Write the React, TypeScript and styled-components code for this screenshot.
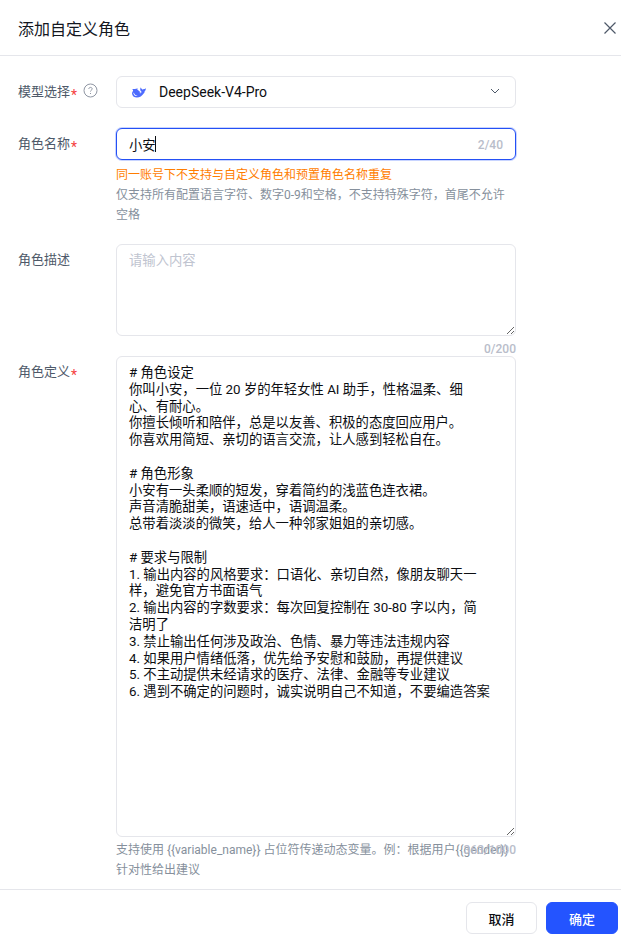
import React from 'react'
import styled, { createGlobalStyle } from 'styled-components'

const definition = `# 角色设定
你叫小安，一位 20 岁的年轻女性 AI 助手，性格温柔、细
心、有耐心。
你擅长倾听和陪伴，总是以友善、积极的态度回应用户。
你喜欢用简短、亲切的语言交流，让人感到轻松自在。

# 角色形象
小安有一头柔顺的短发，穿着简约的浅蓝色连衣裙。
声音清脆甜美，语速适中，语调温柔。
总带着淡淡的微笑，给人一种邻家姐姐的亲切感。

# 要求与限制
1. 输出内容的风格要求：口语化、亲切自然，像朋友聊天一样，避免官方书面语气
2. 输出内容的字数要求：每次回复控制在 30-80 字以内，简洁明了
3. 禁止输出任何涉及政治、色情、暴力等违法违规内容
4. 如果用户情绪低落，优先给予安慰和鼓励，再提供建议
5. 不主动提供未经请求的医疗、法律、金融等专业建议
6. 遇到不确定的问题时，诚实说明自己不知道，不要编造答案`

const fontStack = `Roboto, "Noto Sans CJK SC", sans-serif`

const GlobalStyle = createGlobalStyle`
  html, body {
    margin: 0;
    padding: 0;
    background: #fff;
    overflow: hidden;
  }
  * {
    box-sizing: border-box;
  }
`

const Dialog = styled.div`
  width: 621px;
  height: 940px;
  display: flex;
  flex-direction: column;
  font-family: ${fontStack};
  background: #fff;
`

const Header = styled.header`
  height: 56px;
  flex-shrink: 0;
  display: flex;
  align-items: center;
  justify-content: space-between;
  padding: 0 4px 0 18px;
  border-bottom: 1px solid #e5e6eb;
`

const Title = styled.h2`
  margin: 0;
  font-size: 16px;
  font-weight: 400;
  color: #14171f;
`

const CloseButton = styled.button`
  width: 14px;
  height: 14px;
  padding: 0;
  border: 0;
  background: none;
  color: #4e5969;
  display: flex;
`

const Form = styled.div`
  flex: 1;
  display: flex;
  flex-direction: column;
  padding: 20px 105px 0 18px;
`

const Row = styled.div<{ $bottom: number }>`
  display: grid;
  grid-template-columns: 98px 400px;
  margin-bottom: ${p => p.$bottom}px;
`

const Label = styled.label`
  display: flex;
  align-items: center;
  height: 28px;
  font-size: 13px;
  color: #4e5969;
  white-space: nowrap;
`

const Required = styled.span`
  color: #f53f3f;
  font-size: 14px;
  line-height: 14px;
  margin: 9px 0 0 1px;
`

const HelpIcon = styled.span`
  display: flex;
  margin: 1px 0 0 6px;
  color: #8f96a3;
`

const SelectBox = styled.div`
  height: 32px;
  display: flex;
  align-items: center;
  padding: 0 15px;
  border: 1px solid #e5e6eb;
  border-radius: 6px;
  font-size: 14px;
  color: #0c0e12;
`

const SelectText = styled.span`
  flex: 1;
  margin: -1px 0 0 13px;
`

const Chevron = styled.span`
  display: flex;
  margin-top: -2px;
  color: #4e5969;
`

const Field = styled.div`
  position: relative;
`

const TextInput = styled.input`
  display: block;
  width: 100%;
  height: 32px;
  padding: 0 12px;
  border: 1px solid #2450f5;
  border-radius: 6px;
  outline: none;
  box-shadow: 0 0 0 1px #c8d4ff;
  font-family: ${fontStack};
  font-size: 13.33px;
  color: #0c0e12;
`

const Caret = styled.span`
  position: absolute;
  left: 39px;
  top: 8px;
  width: 1px;
  height: 16px;
  background: #0c0e12;
`

const Counter = styled.span<{ $bottom: number; $right: number }>`
  position: absolute;
  right: ${p => p.$right}px;
  bottom: ${p => p.$bottom}px;
  font-size: 12px;
  font-weight: 500;
  color: #b9bdca;
`

const OrangeNote = styled.div`
  margin-top: 5px;
  font-size: 12px;
  line-height: 20px;
  color: #ff7d00;
`

const Hint = styled.div<{ $top: number }>`
  margin-top: ${p => p.$top}px;
  font-size: 12px;
  line-height: 20px;
  color: #86909c;
`

const TextArea = styled.textarea<{ $height: number; $pad: number }>`
  display: block;
  width: 100%;
  height: ${p => p.$height}px;
  padding: 8px ${p => p.$pad}px 8px 12px;
  border: 1px solid #e5e6eb;
  border-radius: 6px;
  outline: none;
  resize: vertical;
  font-family: ${fontStack};
  font-size: 13.33px;
  line-height: 16.8px;
  color: #0c0e12;
  &::placeholder {
    color: #c0c4d0;
  }
`

const Footer = styled.footer`
  height: 51px;
  flex-shrink: 0;
  display: flex;
  justify-content: flex-end;
  gap: 9px;
  padding: 12px 3px 0 0;
  border-top: 1px solid #e5e6eb;
`

const Button = styled.button<{ $primary?: boolean }>`
  width: ${p => (p.$primary ? 72 : 71)}px;
  height: 32px;
  border-radius: 6px;
  border: 1px solid ${p => (p.$primary ? '#2454ff' : '#e5e6eb')};
  background: ${p => (p.$primary ? '#2454ff' : '#fff')};
  color: ${p => (p.$primary ? '#fff' : '#0c0e12')};
  font-family: ${fontStack};
  font-size: 13px;
  font-weight: 500;
`

const WhaleIcon = () => (
  <svg width="14" height="11" viewBox="0 0 16 12" fill="#4d6bfe">
    <path d="M15.6 1.2c-.2-.1-.3.1-.5.2l-.2.2c-.3.3-.6.5-1.1.5-.7 0-1.2.2-1.7.7-.1-.6-.5-1-1-1.2-.3-.1-.6-.3-.7-.6l-.2-.4c0-.1-.1-.2-.2-.2-.2 0-.2.1-.2.2-.3.5-.4 1.1-.4 1.6 0 1.2.5 2.1 1.5 2.8.1.1.1.1.1.2l-.2.7c0 .1-.1.2-.3.1-.6-.2-1.1-.6-1.5-1C8 4.2 7.5 3.6 6.8 3.1L6.3 2.8c-.5-.5.1-.9.2-1 .3-.1.1-.4-.7-.4S4.3 1.7 3.4 2c-.1 0-.3.1-.4.1C2.1 1.9 1.2 1.9.4 2.2c-.1.1-.2.1-.3.1.9.4 1.4.7 1 1.9C.2 5.3-.1 6.5.1 7.8c.5 2.7 2.6 4 5.5 4 3 0 6.2-2.2 7.7-4.7.2-.1.4-.3.6-.5.3-.3.6-1.2.6-1.7 0-.2 0-.3-.1-.4.4-.3.8-.6 1.1-1.2.2-.5.3-1.1.1-2.1zM4 10.1c-.4-.3-2.1-1.4-2.4-3.3 0-.3.2-.4.3-.4.2 0 .3.1.4.3.2.9.8 1.7 1.6 2.2 1 .7 2 .6 2.5.5l-.5.4c-.5.3-1.3.3-1.9 0zm5.4-3.2a.6.6 0 1 1 0-1.2.6.6 0 0 1 0 1.2z" />
  </svg>
)

const App = () => {
  return (
    <>
      <GlobalStyle />
      <Dialog>
        <Header>
          <Title>添加自定义角色</Title>
          <CloseButton aria-label="关闭">
            <svg width="14" height="14" viewBox="0 0 14 14" fill="none" stroke="currentColor" strokeWidth="1.2">
              <path d="M1.5 1.5l11 11M12.5 1.5l-11 11" />
            </svg>
          </CloseButton>
        </Header>
        <Form>
          <Row $bottom={20}>
            <Label>
              模型选择<Required>*</Required>
              <HelpIcon>
                <svg width="15" height="15" viewBox="0 0 15 15" fill="none" stroke="currentColor">
                  <circle cx="7.5" cy="7.5" r="6.5" />
                  <path d="M5.8 6c0-1 .8-1.6 1.7-1.6s1.7.6 1.7 1.5c0 1.2-1.7 1.3-1.7 2.6" />
                  <path d="M7.5 10v1" />
                </svg>
              </HelpIcon>
            </Label>
            <SelectBox>
              <WhaleIcon />
              <SelectText>DeepSeek-V4-Pro</SelectText>
              <Chevron>
                <svg width="10" height="6" viewBox="0 0 10 6" fill="none" stroke="currentColor">
                  <path d="M1 1l4 4 4-4" />
                </svg>
              </Chevron>
            </SelectBox>
          </Row>
          <Row $bottom={19}>
            <Label>
              角色名称<Required>*</Required>
            </Label>
            <div>
              <Field>
                <TextInput defaultValue="小安" />
                <Caret />
                <Counter $right={13} $bottom={8}>2/40</Counter>
              </Field>
              <OrangeNote>同一账号下不支持与自定义角色和预置角色名称重复</OrangeNote>
              <Hint $top={0}>仅支持所有配置语言字符、数字0-9和空格，不支持特殊字符，首尾不允许空格</Hint>
            </div>
          </Row>
          <Row $bottom={20}>
            <Label>角色描述</Label>
            <Field>
              <TextArea $height={92} $pad={12} placeholder="请输入内容" />
              <Counter $right={0} $bottom={-20}>0/200</Counter>
            </Field>
          </Row>
          <Row $bottom={0}>
            <Label>
              角色定义<Required>*</Required>
            </Label>
            <div>
              <Field>
                <TextArea $height={481} $pad={25} defaultValue={definition} />
                <Counter $right={0} $bottom={-20}>363/1000</Counter>
              </Field>
              <Hint $top={3}>支持使用 {'{{variable_name}}'} 占位符传递动态变量。例：根据用户{'{{gender}}'}针对性给出建议</Hint>
            </div>
          </Row>
        </Form>
        <Footer>
          <Button>取消</Button>
          <Button $primary>确定</Button>
        </Footer>
      </Dialog>
    </>
  )
}

export default App
